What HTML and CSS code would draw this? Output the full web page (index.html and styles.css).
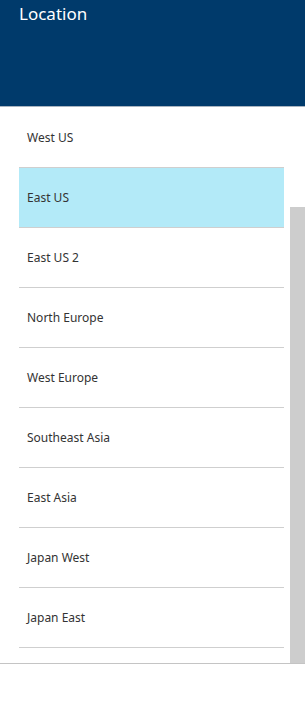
FILE: index.html
```html
<!DOCTYPE html>
<html lang="en">
<head>
    <meta charset="UTF-8">
    <meta name="viewport" content="width=device-width, initial-scale=1.0">
    <title>Location</title>
    <link rel="stylesheet" href="styles.css">
</head>
<body>
    <div class="header">
        <h1 class="title">Location</h1>
    </div>

    <div class="panel">
        <ul class="list">
            <li class="item">West US</li>
            <li class="item selected">East US</li>
            <li class="item">East US 2</li>
            <li class="item">North Europe</li>
            <li class="item">West Europe</li>
            <li class="item">Southeast Asia</li>
            <li class="item">East Asia</li>
            <li class="item">Japan West</li>
            <li class="item">Japan East</li>
            <!-- next row, scrolled out of view -->
            <li class="item"></li>
        </ul>
        <!-- scrollbar -->
        <div class="scrollbar">
            <div class="thumb"></div>
        </div>
    </div>
</body>
</html>
```

FILE: styles.css
```css
body {
    margin: 0;
    background: #fff;
    font-family: "Noto Sans", "Open Sans", sans-serif;
    color: #333;
}
.header {
    height: 106px;
    background: #003a6b;
    border-bottom: 1px solid #a9b4c0;
}
.title {
    margin: 0;
    padding: 4px 0 0 19px;
    font-size: 17px;
    font-weight: normal;
    line-height: 20px;
    color: #fff;
}
.panel {
    display: flex;
    height: 556px;
    border-bottom: 1px solid #c4c4c4;
}
.list {
    flex: 1;
    margin: 0;
    padding: 0 6px 0 19px;
    list-style: none;
    overflow: hidden;
}
.item {
    box-sizing: border-box;
    height: 60px;
    padding-left: 8px;
    display: flex;
    align-items: center;
    border-top: 1px solid #cfcfcf;
    font-size: 12px;
}
.item:first-child {
    border-top-color: transparent;
}
.item.selected {
    background: #b3eaf8;
}
.scrollbar {
    width: 15px;
    padding-top: 100px;
    display: flex;
    flex-direction: column;
}
.thumb {
    flex: 1;
    background: #cdcdcd;
}
```
